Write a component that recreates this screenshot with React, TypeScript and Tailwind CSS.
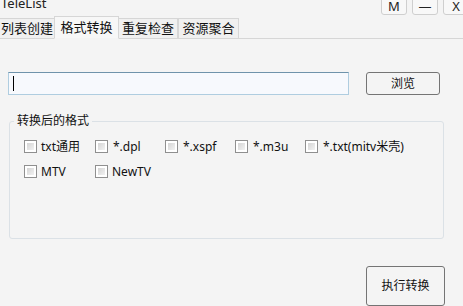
import React from 'react';

const font = {fontFamily: '"Noto Sans", "Noto Sans CJK SC", sans-serif'};

const tabs = [
    {label: '列表创建', w: 'w-[56px]'},
    {label: '格式转换', w: 'w-[65px]', active: true},
    {label: '重复检查', w: 'w-[60px]'},
    {label: '资源聚合', w: 'w-[61px]'},
];

const formats = ['txt通用', '*.dpl', '*.xspf', '*.m3u', '*.txt(mitv米壳)', 'MTV', 'NewTV'];

function Check({label}: {label: string}) {
    return (
        <label className="flex items-center h-[25px] text-[12px] text-[#111]">
            <span className="w-[13px] h-[13px] border border-[#8f8f8f] bg-white p-[2px] shrink-0">
                <span className="block w-full h-full bg-gradient-to-br from-[#d4d4d4] to-[#f2f2f2]"/>
            </span>
            <span className={label.startsWith('*') ? 'ml-[5px]' : 'ml-[4px]'}>{label}</span>
        </label>
    );
}

export default function App() {
    return (
        <div className="w-[463px] h-[306px] overflow-hidden bg-[#f4f4f4] select-none" style={font}>
            {/* Title bar */}
            <div className="flex justify-between h-[16px]">
                <div className="text-[13px] leading-[13px] -mt-[3px] pl-[1px] text-[#222]">TeleList</div>
                <div className="flex gap-[5px] -mt-[3px] -mr-[6px]">
                    {['M', '—', 'X'].map((b) => (
                        <div key={b} className="w-[26px] h-[18px] border border-[#cfcfcf] rounded-[3px] bg-[#f8f8f8] flex items-center justify-center text-[13px] leading-none text-[#222] pt-[1px]">
                            {b}
                        </div>
                    ))}
                </div>
            </div>

            {/* Tabs */}
            <div className="flex items-end h-[23px] -ml-[1px] border-b border-[#d6d6d6]">
                {tabs.map((t) => (
                    <div
                        key={t.label}
                        className={`${t.w} flex items-center justify-center text-[13px] text-[#111] border border-[#d6d6d6] ${t.active ? 'h-[23px] -mb-px border-b-[#f4f4f4] bg-[#f7f7f7] -mx-px z-10' : 'h-[20px] border-b-0 bg-[#f0f0f0]'}`}
                    >
                        {t.label}
                    </div>
                ))}
            </div>

            {/* Path row */}
            <div className="flex pl-[8px] pt-[33px]">
                <div className="w-[341px] h-[23px] border border-[#afcde0] border-t-[#6f93ab] bg-[#f7f9fd] flex items-center pl-[4px]">
                    <span className="w-px h-[15px] bg-black"/>
                </div>
                <button className="ml-[17px] w-[74px] h-[23px] border border-[#747474] rounded-[3px] bg-[#f4f4f4] text-[12px] text-[#111]">
                    浏览
                </button>
            </div>

            {/* Format group */}
            <fieldset className="ml-[9px] mt-[19px] w-[435px] h-[125px] border border-[#dbe1e6] rounded-[3px] pl-[14px] pr-0">
                <legend className="-ml-[10px] px-[3px] text-[12px] leading-[14px] text-[#111]">转换后的格式</legend>
                <div className="grid grid-cols-[71px_70px_70px_70px_100px] pt-[6px]">
                    {formats.map((f) => (
                        <Check key={f} label={f}/>
                    ))}
                </div>
            </fieldset>

            {/* Run */}
            <div className="flex justify-end pr-[18px] pt-[27px]">
                <button className="w-[79px] h-[40px] border border-[#747474] rounded-[3px] bg-[#f4f4f4] text-[12px] text-[#111]">
                    执行转换
                </button>
            </div>
        </div>
    );
}
